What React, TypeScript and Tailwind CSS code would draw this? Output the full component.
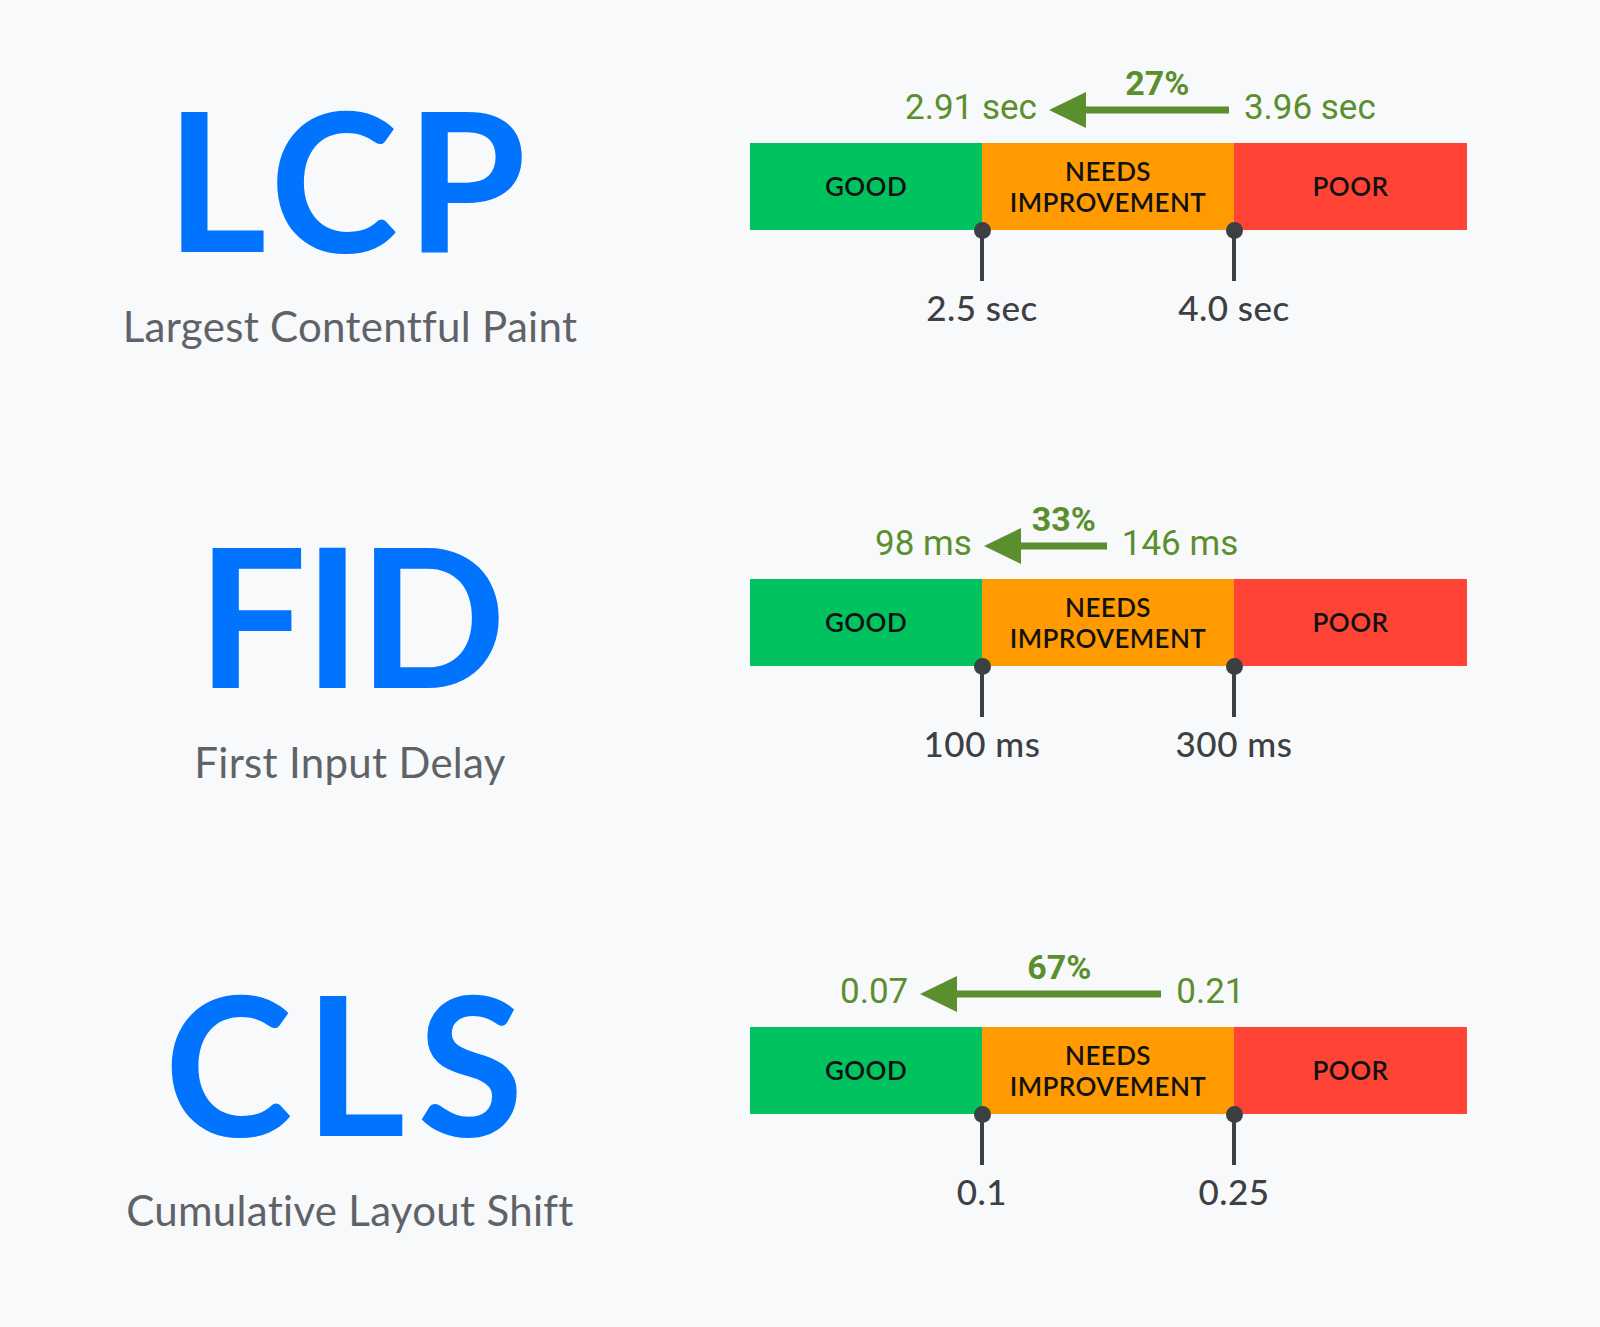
const GREEN = 'text-[#5b8f2e]';

interface ArrowProps {
  length: number;
  percent: string;
}

const Arrow = ({ length, percent }: ArrowProps) => (
  <div className="flex flex-col">
    <div className="-mb-[8px] pl-[37px] text-center font-['Roboto',sans-serif] text-[34px] font-bold leading-none text-[#5b8f2e]">
      {percent}
    </div>
    <svg width={length} height={36} viewBox={`0 0 ${length} 36`}>
      <polygon
        points={`0,18 37,0 37,14.5 ${length},14.5 ${length},21.5 37,21.5 37,36`}
        fill="#5b8f2e"
      />
    </svg>
  </div>
);

const Marker = ({ label }: { label: string }) => (
  <div className="flex w-0 flex-col items-center">
    <div className="-mt-[8.5px] h-[17px] w-[17px] shrink-0 rounded-full bg-[#3c4043]" />
    <div className="-mt-[1px] h-[43px] w-[4px] shrink-0 bg-[#3c4043]" />
    <div className="mt-[9px] whitespace-nowrap font-['Lato',sans-serif] text-[35px] font-medium leading-none tracking-[0.5px] text-[#3c4043]">
      {label}
    </div>
  </div>
);

interface MetricProps {
  short: string;
  tracking: string;
  name: string;
  from: string;
  to: string;
  percent: string;
  offset: string;
  arrow: number;
  good: string;
  poor: string;
  height: string;
}

const Metric = ({ short, tracking, name, from, to, percent, offset, arrow, good, poor, height }: MetricProps) => (
  <div className={`flex items-start ${height}`}>
    <div className="flex w-[700px] flex-col items-center pt-[14px]">
      <h2 className={`font-['Lato',sans-serif] text-[194px] font-bold leading-none text-[#0073ff] ${tracking}`}>
        {short}
      </h2>
      <p className="mt-[31px] font-['Lato',sans-serif] text-[42px] leading-none tracking-[0.3px] text-[#5f6368]">
        {name}
      </p>
    </div>

    <div className="ml-[50px] flex w-[717px] flex-col">
      <div className={`flex items-end ${offset}`}>
        <span className={`pb-[3px] font-['Roboto',sans-serif] text-[35px] leading-none ${GREEN}`}>
          {from}
        </span>
        <div className="ml-[12px] mr-[15px]">
          <Arrow length={arrow} percent={percent} />
        </div>
        <span className={`pb-[3px] font-['Roboto',sans-serif] text-[35px] leading-none ${GREEN}`}>
          {to}
        </span>
      </div>

      <div className="mt-[15px] flex h-[87px] font-['Lato',sans-serif] text-[26px] font-semibold tracking-[0.4px] text-[#111]">
        <div className="flex w-[232px] items-center justify-center bg-[#00c35f]">GOOD</div>
        <div className="flex w-[252px] flex-col items-center justify-center bg-[#ff9a00] leading-[31px]">
          <span>NEEDS</span>
          <span>IMPROVEMENT</span>
        </div>
        <div className="flex flex-1 items-center justify-center bg-[#ff4335]">POOR</div>
      </div>

      <div className="flex">
        <div className="w-[232px]" />
        <Marker label={good} />
        <div className="w-[252px]" />
        <Marker label={poor} />
      </div>
    </div>
  </div>
);

export default function App() {
  return (
    <div className="min-h-[1327px] w-[1600px] bg-[#f8f9fb] pt-[66px]">
      <Metric
        short="LCP"
        tracking="tracking-[8px]"
        name="Largest Contentful Paint"
        from="2.91 sec"
        to="3.96 sec"
        percent="27%"
        offset="ml-[155px]"
        arrow={180}
        good="2.5 sec"
        poor="4.0 sec"
        height="h-[436px]"
      />
      <Metric
        short="FID"
        tracking="tracking-[-3px]"
        name="First Input Delay"
        from="98 ms"
        to="146 ms"
        percent="33%"
        offset="ml-[125px]"
        arrow={123}
        good="100 ms"
        poor="300 ms"
        height="h-[448px]"
      />
      <Metric
        short="CLS"
        tracking="tracking-[12px]"
        name="Cumulative Layout Shift"
        from="0.07"
        to="0.21"
        percent="67%"
        offset="ml-[90px]"
        arrow={241}
        good="0.1"
        poor="0.25"
        height="h-[300px]"
      />
    </div>
  );
}
